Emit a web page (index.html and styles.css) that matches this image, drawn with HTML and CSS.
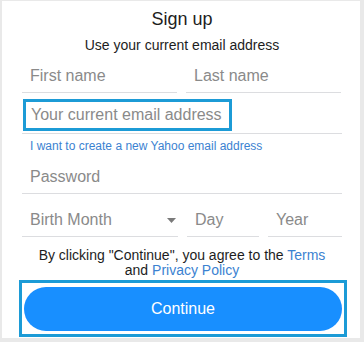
FILE: index.html
```html
<!DOCTYPE html>
<html>
<head>
<meta charset="utf-8">
<link rel="stylesheet" href="styles.css">
</head>
<body>
<div class="card">
  <h1 class="title">Sign up</h1>
  <p class="subtitle">Use your current email address</p>
  <div class="row names">
    <div class="field w-half"><span class="ph">First name</span></div>
    <div class="field w-half"><span class="ph">Last name</span></div>
  </div>
  <div class="field email">
    <span class="focus-box"><span class="ph">Your current email address</span></span>
  </div>
  <a class="yahoo-link" href="#">I want to create a new Yahoo email address</a>
  <div class="field password"><span class="ph">Password</span></div>
  <div class="row birth">
    <div class="field month">
      <span class="ph">Birth Month</span>
      <svg class="caret" width="9" height="5" viewBox="0 0 9 5"><path d="M0 0H9L4.5 5Z" fill="#7a7a7a"/></svg>
    </div>
    <div class="field day"><span class="ph">Day</span></div>
    <div class="field year"><span class="ph">Year</span></div>
  </div>
  <p class="terms">By clicking "Continue", you agree to the <a href="#">Terms</a><br>and <a href="#">Privacy Policy</a></p>
  <div class="btn-focus">
    <button class="continue">Continue</button>
  </div>
</div>
</body>
</html>
```
FILE: styles.css
```css
html, body {
  margin: 0;
  padding: 0;
  background: #e9e9e9;
}
body {
  font-family: "Liberation Sans", Arial, sans-serif;
  color: #26282a;
}
.card {
  box-sizing: border-box;
  width: 358px;
  height: 337px;
  margin: 1px 4px 0 2px;
  background: #fff;
  padding: 8px 18px 0 20px;
  display: flex;
  flex-direction: column;
}
.title {
  margin: 0;
  font-size: 18px;
  line-height: 20px;
  font-weight: normal;
  text-align: center;
  color: #1d1d1d;
}
.subtitle {
  margin: 8px 0 0;
  font-size: 14px;
  line-height: 16px;
  text-align: center;
  color: #1d1d1d;
}
.row {
  display: flex;
  gap: 9px;
}
.names {
  margin-top: 7px;
}
.field {
  box-sizing: border-box;
  height: 33px;
  border-bottom: 1px solid #dcdde0;
  display: flex;
  align-items: center;
  padding-left: 8px;
  font-size: 16px;
}
.ph {
  color: #8a8a8a;
  line-height: 20px;
}
.w-half {
  width: 155px;
}
.email {
  margin-top: 6px;
  height: 35px;
  padding-left: 1px;
  align-items: flex-start;
}
.focus-box {
  display: block;
  box-sizing: border-box;
  width: 209px;
  height: 32px;
  border: 3px solid #1c9bd6;
  padding-left: 5px;
  line-height: 26px;
}
.focus-box .ph {
  line-height: 26px;
}
.yahoo-link {
  margin-top: 5px;
  padding-left: 8px;
  font-size: 12px;
  line-height: 14px;
  color: #3b82d1;
  text-decoration: none;
}
.password {
  margin-top: 8px;
}
.birth {
  margin-top: 10px;
}
.month {
  width: 156px;
  justify-content: space-between;
  padding-right: 2px;
}
.day {
  width: 72px;
}
.year {
  width: 74px;
}
.terms {
  margin: 11px 0 0;
  font-size: 14px;
  line-height: 15px;
  text-align: center;
  color: #1d1d1d;
}
.terms a {
  color: #3b82d1;
  text-decoration: none;
}
.btn-focus {
  margin: 2px -5px 0 -3px;
  border: 3px solid #1c9bd6;
  padding: 4px 2px 3px;
}
.continue {
  display: block;
  width: 100%;
  height: 44px;
  border: 0;
  border-radius: 22px;
  background: #188fff;
  color: #fff;
  font-family: "Liberation Sans", Arial, sans-serif;
  font-size: 16px;
  padding: 0;
}
```
